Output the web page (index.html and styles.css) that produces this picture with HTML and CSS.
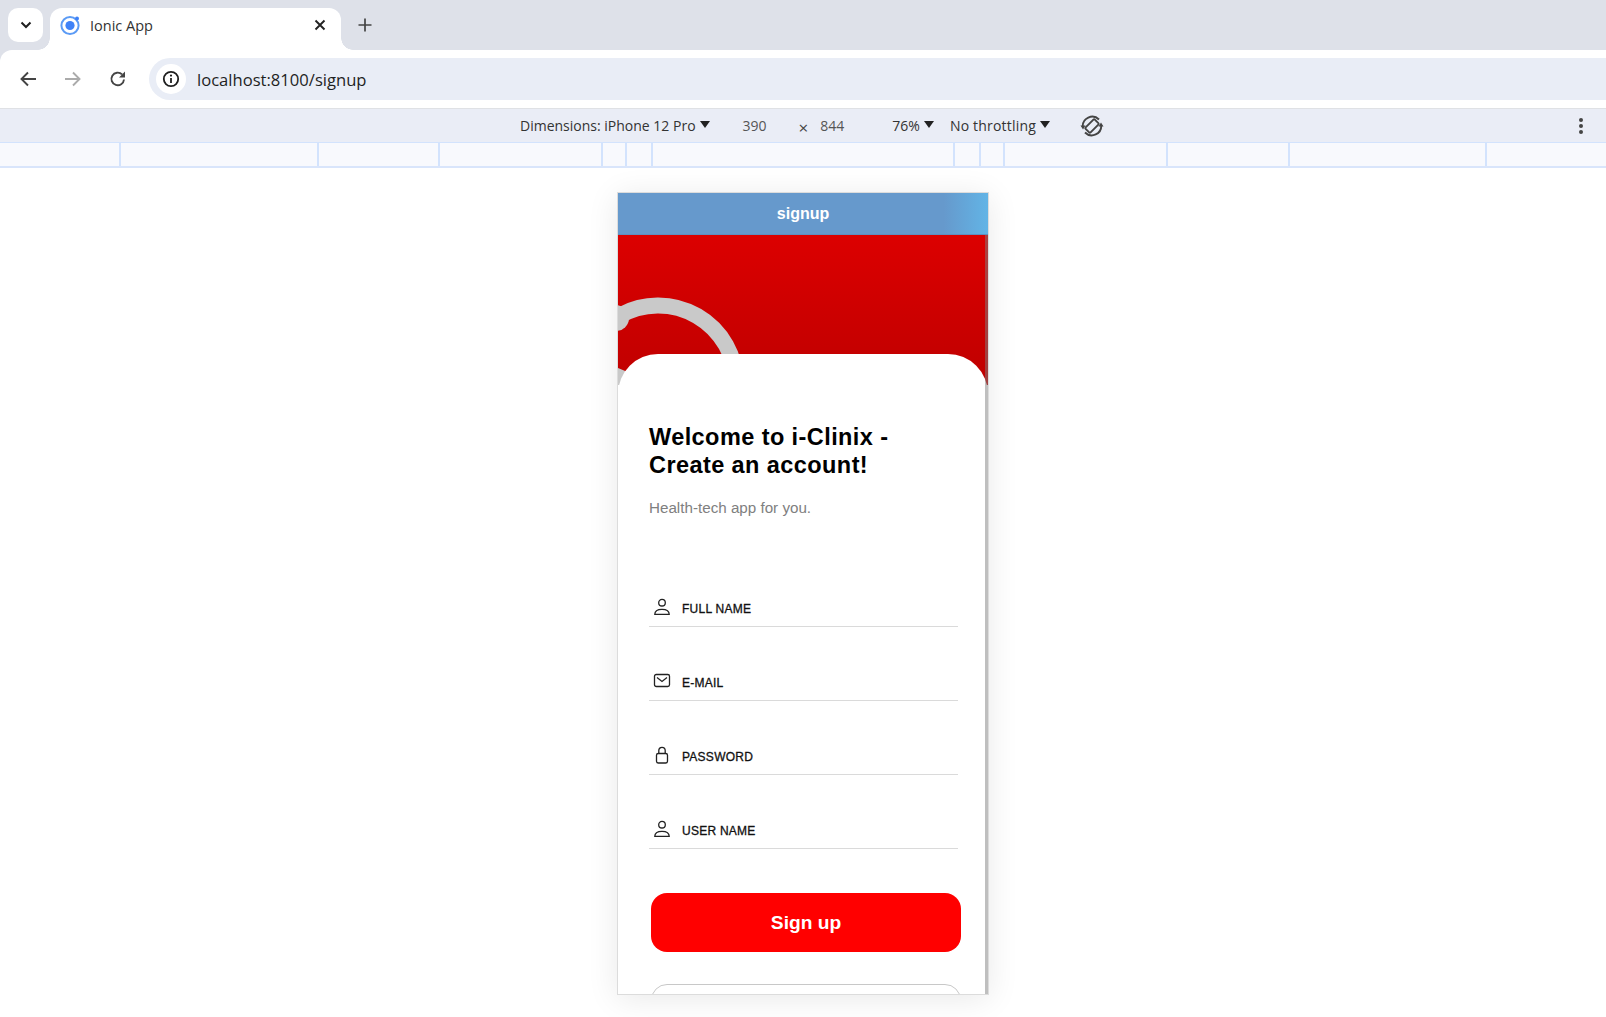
FILE: index.html
```html
<!DOCTYPE html>
<html lang="en">
<head>
<meta charset="utf-8">
<title>Ionic App</title>
<link rel="stylesheet" href="styles.css">
</head>
<body>
<header class="chrome">
  <div class="tabstrip">
    <button class="tab-search" aria-label="Search tabs">
      <svg width="12" height="8" viewBox="0 0 12 8"><path d="M1.5 1.500 6 6l4.500-4.500" fill="none" stroke="#1f1f1f" stroke-width="2"/></svg>
    </button>
    <div class="tab">
      <svg class="favicon" width="22" height="22" viewBox="0 0 22 22"><circle cx="11" cy="11.500" r="8.600" fill="none" stroke="#5b9bf5" stroke-width="2"/><circle cx="11" cy="11.500" r="4.600" fill="#3f82f7"/><circle cx="18" cy="4.500" r="2" fill="#3f82f7"/></svg>
      <span class="tab-title">Ionic App</span>
      <svg class="tab-close" width="12" height="12" viewBox="0 0 12 12"><path d="M1.500 1.500l9 9m0-9l-9 9" stroke="#222" stroke-width="1.900"/></svg>
    </div>
    <svg class="new-tab" width="14" height="14" viewBox="0 0 14 14"><path d="M7 .5v13M.5 7h13" stroke="#444" stroke-width="1.700"/></svg>
  </div>
  <div class="toolbar">
    <svg class="nav" width="18" height="16" viewBox="0 0 18 16"><path d="M17 8H2.500M9 1.500 2.500 8 9 14.500" fill="none" stroke="#444" stroke-width="1.900"/></svg>
    <svg class="nav nav-off" width="18" height="16" viewBox="0 0 18 16"><path d="M1 8h14.500M9 1.500 15.500 8 9 14.500" fill="none" stroke="#ababab" stroke-width="1.900"/></svg>
    <svg class="nav" width="18" height="18" viewBox="0 0 18 18"><path d="M15 9.500a6.300 6.300 0 1 1-1.900-5.100" fill="none" stroke="#444" stroke-width="1.900"/><path d="M16 1.500v6h-6z" fill="#444"/></svg>
    <div class="omnibox">
      <span class="site-info"><svg width="18" height="18" viewBox="0 0 18 18"><circle cx="9" cy="9" r="7.200" fill="none" stroke="#1f1f1f" stroke-width="1.800"/><path d="M9 8v5" stroke="#1f1f1f" stroke-width="1.800"/><circle cx="9" cy="5.600" r="1.100" fill="#1f1f1f"/></svg></span>
      <span class="url">localhost:8100/signup</span>
    </div>
  </div>
  <div class="devicebar">
    <span class="dev-item dev-dim">Dimensions: iPhone 12 Pro<i class="caret"></i></span>
    <span class="dev-num dev-w">390</span>
    <span class="dev-x">×</span>
    <span class="dev-num dev-h">844</span>
    <span class="dev-item dev-zoom">76%<i class="caret"></i></span>
    <span class="dev-item dev-net">No throttling<i class="caret"></i></span>
    <svg class="rotate" width="24" height="24" viewBox="0 0 24 24"><g fill="none" stroke="#444" stroke-width="1.900"><rect x="8.500" y="5.500" width="7" height="13" rx="1" transform="rotate(45 12 12)"/><path d="M2.800 13A9.500 9.500 0 0 1 19 5.500M21.200 11A9.500 9.500 0 0 1 5 18.500"/></g><path d="M0.500 11.500h5L3 15.500zM23.500 12.500h-5l2.500-4z" fill="#444"/></svg>
    <span class="dev-more"><i></i><i></i><i></i></span>
  </div>
  <div class="ruler">
    <i style="width:121px"></i><i style="width:198px"></i><i style="width:121px"></i><i style="width:163px"></i><i style="width:24px"></i><i style="width:26px"></i><i style="width:302px"></i><i style="width:26px"></i><i style="width:24px"></i><i style="width:163px"></i><i style="width:122px"></i><i style="width:197px"></i>
  </div>
</header>
<main class="stage">
  <div class="phone">
    <div class="app-header">signup</div>
    <div class="content">
      <div class="hero">
        <svg class="hero-art" width="370" height="150" viewBox="0 0 370 150">
          <path d="M0 81.600A77.900 77.900 0 0 1 118 150" fill="none" stroke="#c9c9c9" stroke-width="16"/>
          <circle cx="-2" cy="83" r="13" fill="#c9c9c9"/>
          <path d="M0 133 12 138V150H0z" fill="#c9c9c9"/>
        </svg>
      </div>
      <section class="card">
        <h1 class="title">Welcome to i-Clinix - Create an account!</h1>
        <p class="subtitle">Health-tech app for you.</p>
        <form class="fields">
          <label class="field">
            <svg class="ficon" width="18" height="18" viewBox="0 0 18 18"><g fill="none" stroke="#222" stroke-width="1.300"><circle cx="9" cy="4.700" r="3.300"/><path d="M1.800 16.300c0-3.400 2.600-5 7.200-5s7.200 1.600 7.200 5z"/></g></svg>
            <span>FULL NAME</span>
          </label>
          <label class="field">
            <svg class="ficon" width="18" height="18" viewBox="0 0 18 18"><g fill="none" stroke="#222" stroke-width="1.300"><rect x="1.500" y="2.500" width="15" height="12" rx="1.800"/><path d="M4 5.500 9 9.500l5-4"/></g></svg>
            <span>E-MAIL</span>
          </label>
          <label class="field">
            <svg class="ficon" width="18" height="18" viewBox="0 0 18 18"><g fill="none" stroke="#222" stroke-width="1.300"><rect x="3.500" y="7.500" width="11" height="9.500" rx="1.800"/><path d="M5.800 7.500V4.500a3.200 3.200 0 0 1 6.400 0v3"/></g></svg>
            <span>PASSWORD</span>
          </label>
          <label class="field">
            <svg class="ficon" width="18" height="18" viewBox="0 0 18 18"><g fill="none" stroke="#222" stroke-width="1.300"><circle cx="9" cy="4.700" r="3.300"/><path d="M1.800 16.300c0-3.400 2.600-5 7.200-5s7.200 1.600 7.200 5z"/></g></svg>
            <span>USER NAME</span>
          </label>
        </form>
        <button class="btn-primary" type="button">Sign up</button>
        <div class="btn-outline"></div>
      </section>
      <div class="scrollbar"></div>
    </div>
  </div>
</main>
</body>
</html>
```
FILE: styles.css
```css
* { box-sizing: border-box; }
html, body { margin: 0; height: 100%; overflow: hidden; background: #fff; }
body { font-family: "Open Sans", "Noto Sans", sans-serif; color: #1f1f1f; width: 1606px; height: 1017px; }
i { font-style: normal; }

/* browser chrome */
.chrome { background: #dee1e9; }
.tabstrip { height: 50px; display: flex; align-items: flex-start; padding: 8px 0 0 8px; }
.tab-search { width: 35px; height: 34px; border: 0; padding: 0; background: #fff; border-radius: 10px; display: flex; align-items: center; justify-content: center; }
.tab { position: relative; width: 291px; height: 42px; margin-left: 7px; background: #fff; border-radius: 12px 12px 0 0; display: flex; align-items: flex-start; padding: 6px 14px 0 9px; }
.tab::before, .tab::after { content: ""; position: absolute; bottom: 0; width: 12px; height: 12px; background: radial-gradient(circle at 0 0, transparent 11.500px, #fff 12px); }
.tab::before { left: -12px; }
.tab::after { right: -12px; background: radial-gradient(circle at 100% 0, transparent 11.500px, #fff 12px); }
.tab-title { font-size: 14.500px; line-height: 20px; margin-left: 9px; color: #333; flex: 1; padding-top: 2px; }
.favicon { flex: none; }
.tab-close { margin: 5px 1px 0 0; }
.new-tab { margin: 10px 0 0 17px; }

.toolbar { height: 59px; background: #fff; border-bottom: 1px solid #dfe1e5; border-radius: 12px 0 0 0; display: flex; align-items: center; padding: 0 0 0 19px; }
.nav { flex: none; margin-right: 27px; }
.nav-off { margin-right: 27px; }
.omnibox { flex: 1; height: 42px; margin-left: -5px; background: #e9edf6; border-radius: 21px 0 0 21px; display: flex; align-items: center; padding-left: 7px; }
.site-info { width: 30px; height: 30px; background: #fff; border-radius: 50%; display: flex; align-items: center; justify-content: center; }
.url { margin-left: 11px; font-size: 16.600px; color: #1f1f1f; }

.devicebar { height: 33px; background: #eaedf6; display: flex; align-items: center; font-size: 14px; color: #333; padding-left: 520px; }
.dev-item { display: inline-flex; align-items: center; white-space: nowrap; }
.caret { display: inline-block; width: 0; height: 0; margin: -3px 0 0 4px; border-left: 5px solid transparent; border-right: 5px solid transparent; border-top: 7px solid #222; }
.dev-num { color: #555; width: 42px; }
.dev-w { margin-left: 33px; }
.dev-x { margin-left: 14px; padding-top: 3px; color: #444; font-size: 17px; }
.dev-h { margin-left: 12px; }
.dev-zoom { margin-left: 30px; }
.dev-net { margin-left: 16px; letter-spacing: .2px; }
.rotate { margin-left: 30px; }
.dev-more { display: flex; flex-direction: column; gap: 2px; margin-left: auto; margin-right: 23px; }
.dev-more i { width: 4px; height: 4px; border-radius: 50%; background: #444; }

.ruler { height: 26px; background: #f8f9fd; border-top: 1px solid #d3e3fd; border-bottom: 2px solid #d9e5fb; display: flex; }
.ruler i { display: block; height: 23px; border-right: 2px solid #d3e3fd; flex: none; }

/* stage */
.stage { display: flex; justify-content: center; padding: 24px 0 0; }
.phone { width: 372px; height: 803px; background: #fff; border: 1px solid #dcdcdc; box-shadow: 0 4px 30px rgba(0,0,0,.09); overflow: hidden; display: flex; flex-direction: column; font-family: "Liberation Sans", Arial, sans-serif; }
.app-header { height: 42px; flex: none; background: linear-gradient(90deg, #6699cc 0, #6699cc 88%, #62b4e6 100%); color: #fff; font-weight: 700; font-size: 16px; display: flex; align-items: center; justify-content: center; border-bottom: 1px solid #5f8fc0; }
.content { position: relative; flex: 1; overflow: hidden; }
.hero { height: 150px; background: linear-gradient(180deg, #dc0000, #bf0000); overflow: hidden; }
.hero-art { display: block; }
.card { position: relative; margin-top: -31px; background: #fff; border-radius: 40px 40px 0 0; padding: 69px 30px 0 31px; }
.title { margin: 0; font-size: 23.500px; line-height: 28px; font-weight: 700; color: #000; letter-spacing: .42px; }
.subtitle { margin: 19px 0 0; font-size: 15.200px; line-height: 20px; color: #808080; }
.fields { display: flex; flex-direction: column; gap: 40px; margin-top: 75px; }
.field { height: 34px; display: flex; align-items: flex-start; gap: 11px; border-bottom: 1px solid #dadada; padding: 5px 0 0 4px; font-size: 12px; font-weight: 400; color: #111; letter-spacing: .25px; -webkit-text-stroke: .3px #111; }
.field span { padding-top: 4px; }
.ficon { flex: none; }
.btn-primary { display: block; width: 310px; height: 59px; margin: 44px 0 0 2px; border: 0; border-radius: 16px; background: #ff0000; color: #fff; font-family: inherit; font-size: 19.200px; font-weight: 700; }
.btn-outline { width: 310px; height: 50px; margin: 32px 0 0 2px; border: 1px solid #c8c8c8; border-radius: 16px; }
.scrollbar { position: absolute; top: 0; right: 0; bottom: 0; width: 3px; background: rgba(128,128,128,.5); }
```
